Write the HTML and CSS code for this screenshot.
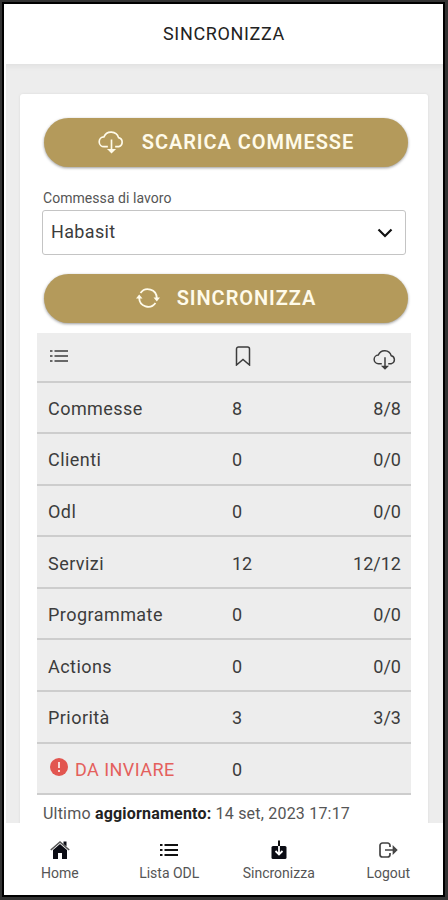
FILE: index.html
```
<!DOCTYPE html>
<html lang="it">

<head>
   <meta charset="UTF-8">
   <meta name="viewport" content="width=device-width, initial-scale=1.0">
   <title>Sincronizza</title>
   <link rel="stylesheet" href="styles.css">
</head>

<body>
   <svg class="sprite" width="0" height="0">
      <symbol id="cloud" viewBox="0 0 26 24">
         <path d="M9.500 16H6a4.700 4.700 0 0 1-.3-9.400A7.500 7.500 0 0 1 19.800 7.300 4.500 4.500 0 0 1 20 16h-3.500M13 9v12M10.500 19l2.500 2.500 2.500-2.500z" />
      </symbol>
      <symbol id="list" viewBox="0 0 18 14">
         <path d="M4.500 2H18M4.500 7H18M4.500 12H18M0 2h2.500M0 7h2.500M0 12h2.500" />
      </symbol>
   </svg>
   <div class="app-wrap">
      <header>
         <h1>SINCRONIZZA</h1>
      </header>
      <main>
         <section class="card">
            <button class="btn">
               <svg class="icon-cloud" width="27" height="25"><use href="#cloud" /></svg>
               <span>SCARICA COMMESSE</span>
            </button>
            <div class="field">
               <div class="label">Commessa di lavoro</div>
               <div class="select">
                  <span>Habasit</span>
                  <svg width="16" height="10" viewBox="0 0 16 10"><path d="M1.500 1.500L8 8l6.500-6.500" /></svg>
               </div>
            </div>
            <button class="btn">
               <svg class="icon-sync" width="24" height="22" viewBox="0 0 24 22">
                  <path d="M4.500 6A9 9 0 0 1 20.800 11M19.500 16A9 9 0 0 1 3.200 11" />
                  <path class="fill" d="M17.500 10.500H24l-3.200 4zM0 11.500h6.500l-3.300-4z" />
               </svg>
               <span>SINCRONIZZA</span>
            </button>
            <div class="table">
               <div class="row head">
                  <span><svg class="icon-list" width="18" height="14"><use href="#list" /></svg></span>
                  <span><svg class="icon-bookmark" width="16" height="20" viewBox="0 0 16 20"><path d="M1.500 3a2 2 0 0 1 2-2h9a2 2 0 0 1 2 2v16L8 13.500 1.500 19z" /></svg></span>
                  <span><svg class="icon-cloud" width="24" height="22"><use href="#cloud" /></svg></span>
               </div>
               <div class="row"><span>Commesse</span><span>8</span><span>8/8</span></div>
               <div class="row"><span>Clienti</span><span>0</span><span>0/0</span></div>
               <div class="row"><span>Odl</span><span>0</span><span>0/0</span></div>
               <div class="row"><span>Servizi</span><span>12</span><span>12/12</span></div>
               <div class="row"><span>Programmate</span><span>0</span><span>0/0</span></div>
               <div class="row"><span>Actions</span><span>0</span><span>0/0</span></div>
               <div class="row"><span>Priorità</span><span>3</span><span>3/3</span></div>
               <div class="row alert">
                  <span>
                     <svg width="18" height="18" viewBox="0 0 18 18"><circle cx="9" cy="9" r="9" /><path d="M9 4v6M9 12v2" /></svg>
                     DA INVIARE
                  </span>
                  <span>0</span>
               </div>
            </div>
            <p class="updated">Ultimo <b>aggiornamento:</b> 14 set, 2023 17:17</p>
         </section>
      </main>
      <nav>
         <a class="tab">
            <svg width="20" height="20" viewBox="0 0 20 20">
               <path class="solid" d="M3 10l7-6 7 6v8.500q0 .5-.5.500H12v-6H8v6H3.500q-.5 0-.5-.5z" />
               <path class="solid" d="M13.500 1.500h3v5l-3-2.500z" />
               <path class="roof" d="M.8 10L10 2l9.200 8" />
            </svg>
            <span>Home</span>
         </a>
         <a class="tab">
            <svg class="icon-list" width="18" height="20"><use href="#list" /></svg>
            <span>Lista ODL</span>
         </a>
         <a class="tab">
            <svg width="20" height="20" viewBox="0 0 20 20">
               <path class="solid" d="M4 6h12a1.500 1.500 0 0 1 1.500 1.500v10A1.500 1.500 0 0 1 16 19H4a1.500 1.500 0 0 1-1.500-1.500v-10A1.500 1.500 0 0 1 4 6z" />
               <path class="stem" d="M10 .5V6" />
               <path class="arrow" d="M10 6v8.500M6.500 11l3.500 3.500 3.500-3.500" />
            </svg>
            <span>Sincronizza</span>
         </a>
         <a class="tab">
            <svg width="20" height="20" viewBox="0 0 20 20">
               <path class="line" d="M12 7V5.500A2.500 2.500 0 0 0 9.500 3h-5A2.500 2.500 0 0 0 2 5.500v9A2.500 2.500 0 0 0 4.500 17h5a2.500 2.500 0 0 0 2.500-2.500V13M7 10h11M15.500 7l3 3-3 3z" />
            </svg>
            <span>Logout</span>
         </a>
      </nav>
   </div>
</body>

</html>
```
FILE: styles.css
```
* {
   margin: 0;
   padding: 0;
   box-sizing: border-box;
}

body {
   height: 900px;
   padding: 2px 3px 3px 2px;
   overflow: hidden;
   background: #333;
   font-family: Roboto, sans-serif;
   color: #3c3c3c;
}

.sprite {
   position: absolute;
}

svg {
   display: block;
   fill: none;
   stroke: currentColor;
}

.app-wrap {
   height: 895px;
   display: flex;
   flex-direction: column;
   border: 2px solid #000;
   background: #fff;
}

header {
   height: 60px;
   flex: none;
   display: flex;
   align-items: center;
   justify-content: center;
   padding: 0 0 2px 1px;
}

header h1 {
   font-size: 18px;
   font-weight: 400;
   letter-spacing: 0.65px;
   color: #222;
}

main {
   flex: 1;
   min-height: 0;
   overflow: hidden;
   margin-left: 2px;
   padding: 30px 15px 0 14px;
   background: #ededed;
   box-shadow: inset 0 5px 4px -2px #e2e2e2;
}

.card {
   height: 760px;
   padding: 24px 17px 0;
   border-radius: 3px 3px 0 0;
   background: #fff;
   box-shadow: 0 0 3px rgba(0, 0, 0, 0.08);
}

.btn {
   width: 364px;
   height: 49px;
   margin-left: 7px;
   padding-bottom: 2px;
   display: flex;
   align-items: center;
   justify-content: center;
   gap: 17px;
   border: none;
   border-radius: 25px;
   background: #b49a5b;
   box-shadow: 0 1px 3px rgba(0, 0, 0, 0.4);
   color: #fffbea;
   font-family: inherit;
   font-size: 20px;
   font-weight: 600;
   letter-spacing: 0.95px;
}

.icon-cloud {
   stroke-width: 1.6;
}

.icon-sync {
   stroke-width: 1.8;
}

.btn svg {
   margin-top: 1px;
}

.icon-sync .fill {
   fill: currentColor;
   stroke: none;
}

.field {
   width: 364px;
   margin: 23px 0 19px 5px;
}

.label {
   height: 20px;
   line-height: 16px;
   padding-left: 1px;
   font-size: 14px;
   letter-spacing: 0.05px;
   color: #555;
}

.select {
   height: 45px;
   display: flex;
   align-items: center;
   justify-content: space-between;
   padding: 0 12px 2px 8px;
   border: 1px solid #c4c4c4;
   border-radius: 3px;
   font-size: 18px;
   letter-spacing: 0.35px;
}

.select svg {
   margin-top: 2px;
   stroke: #111;
   stroke-width: 2.200;
}

.table {
   width: 374px;
   margin-top: 10px;
   background: #ededed;
}

.row {
   height: 51.6px;
   display: grid;
   grid-template-columns: 184px 80px 1fr;
   align-items: center;
   padding: 2px 10px 0 11px;
   border-bottom: 2px solid #cdcdcd;
   font-size: 18px;
   letter-spacing: 0.45px;
}

.row span:nth-child(2) {
   justify-self: start;
   letter-spacing: 0;
}

.row span:nth-child(3) {
   justify-self: end;
   letter-spacing: 0;
}

.head {
   height: 49.500px;
}

.head .icon-list,
.head .icon-bookmark {
   margin-top: -3px;
   stroke-width: 1.5;
}

.head .icon-list {
   margin-left: 2px;
}

.head .icon-bookmark {
   margin-left: 3px;
}

.head .icon-cloud {
   margin-right: 4px;
   margin-top: 4px;
}

.alert span:first-child {
   display: flex;
   align-items: center;
   gap: 7px;
   color: #e4605c;
}

.alert svg {
   margin: -5px 0 0 2px;
   fill: #e25650;
   stroke: none;
}

.alert path {
   stroke: #fbd9d7;
   stroke-width: 2;
}

.updated {
   margin: 9px 0 0 6px;
   line-height: 20px;
   font-size: 16px;
   letter-spacing: 0.2px;
   color: #555;
}

.updated b {
   font-weight: 700;
   color: #222;
}

nav {
   height: 72px;
   flex: none;
   display: grid;
   grid-template-columns: repeat(4, 1fr);
   padding-left: 1px;
}

.tab {
   display: flex;
   flex-direction: column;
   align-items: center;
   padding-top: 17px;
   font-size: 14px;
   color: #555;
}

.tab svg {
   color: #111;
}

.tab span {
   margin-top: 4px;
   line-height: 18px;
}

.tab .icon-list {
   stroke-width: 2.200;
}

.solid {
   fill: #0b0c14;
   stroke: none;
}

.roof {
   stroke: #555;
   stroke-width: 1.6;
}

.stem {
   stroke-width: 2;
}

.arrow {
   stroke: #fff;
   stroke-width: 1.8;
}

.line {
   stroke: #444;
   stroke-width: 1.7;
}
```
